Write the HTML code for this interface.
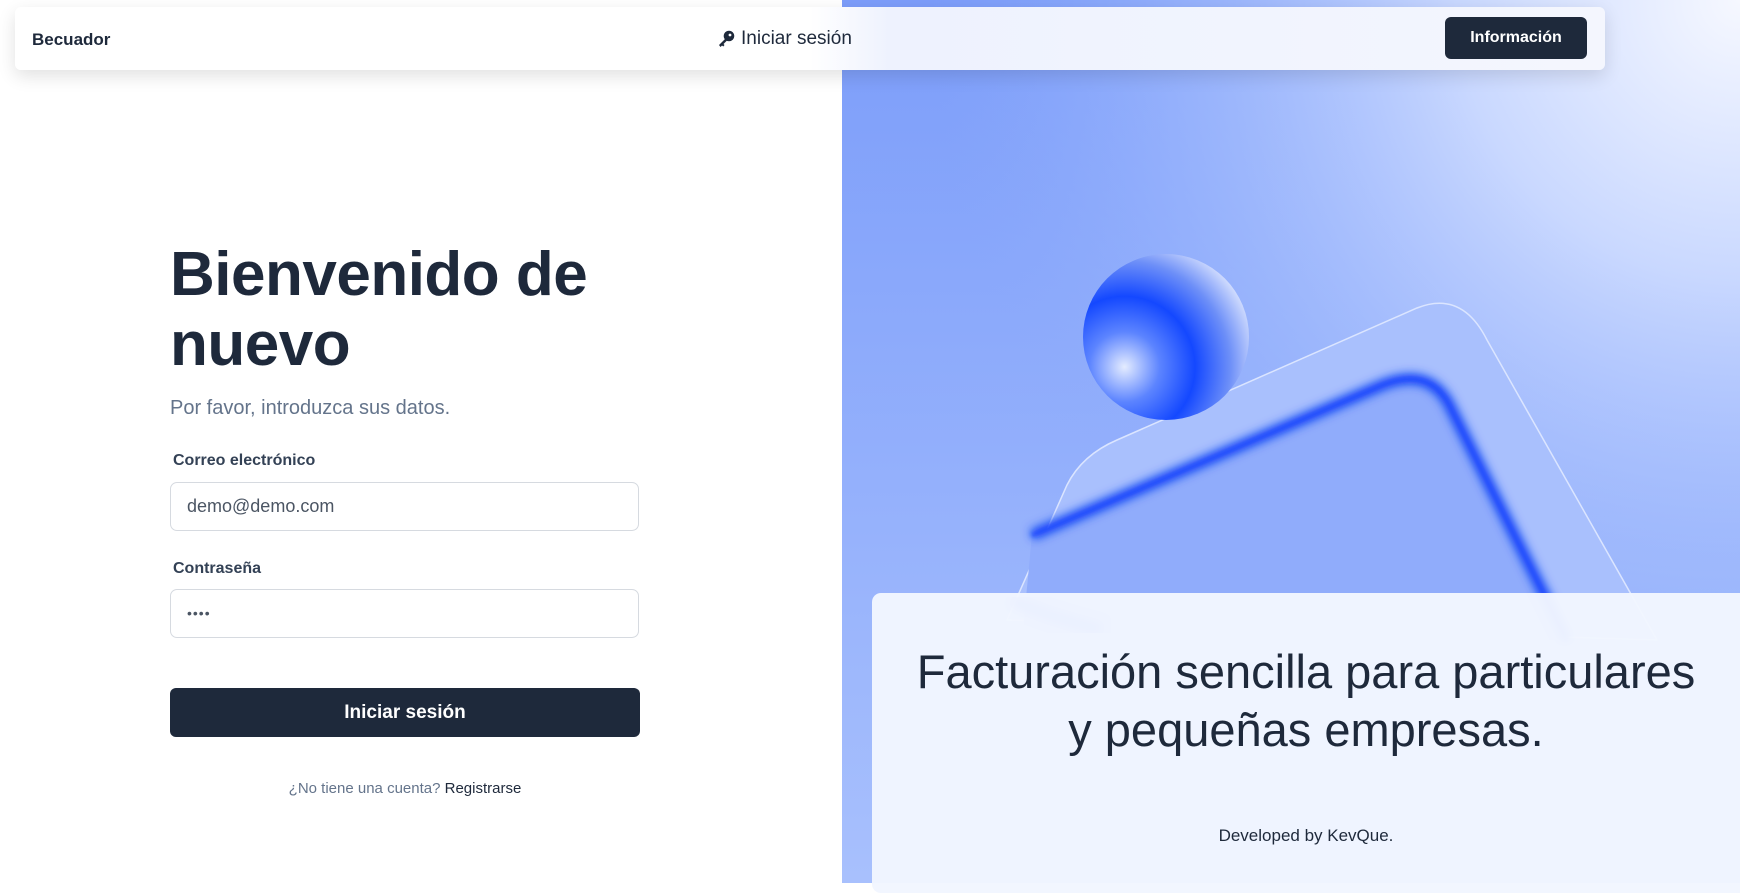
<!DOCTYPE html>
<html><head><meta charset="utf-8">
<style>
*{box-sizing:border-box;margin:0;padding:0}
html,body{width:1740px;height:883px;overflow:hidden;background:#fff;font-family:"Liberation Sans","DejaVu Sans",sans-serif;color:#1e293b}
.right{position:absolute;left:842px;top:0;width:898px;height:883px;overflow:hidden;background:#8eabfb}
.nav{position:absolute;left:15px;top:7px;width:1590px;height:63px;border-radius:6px;
background:linear-gradient(90deg,#fff 0%,#fff 50%,#eef2fe 55%,#f4f6fe 100%);box-shadow:0 6px 18px rgba(0,0,0,.12);z-index:5}
.brand{position:absolute;left:17px;top:23px;font-size:17px;font-weight:bold;color:#1e293b}
.mid{position:absolute;left:702px;top:21px;font-size:19px;color:#1e293b;display:flex;align-items:center;gap:6px}
.info{position:absolute;left:1430px;top:10px;width:142px;height:42px;border-radius:6px;background:#1e293b;color:#fff;font-size:16px;font-weight:bold;display:flex;align-items:center;justify-content:center}
h1{position:absolute;left:170px;top:240px;font-size:62px;line-height:70px;font-weight:bold;color:#1e293b;letter-spacing:-0.5px}
.sub{position:absolute;left:170px;top:397px;font-size:20px;color:#64748b}
.lbl{position:absolute;left:173px;font-size:16px;font-weight:bold;color:#334155}
.inp{position:absolute;left:170px;width:469px;height:49px;border:1px solid #d6dae0;border-radius:7px;font-size:18px;color:#4b5563;padding-left:16px;line-height:47px}
.btn{position:absolute;left:170px;top:688px;width:470px;height:49px;border-radius:6px;background:#1e293b;color:#fff;font-size:19px;font-weight:bold;text-align:center;line-height:49px}
.foot{position:absolute;left:170px;width:470px;top:780px;text-align:center;font-size:15px;color:#64748b}
.foot b{color:#1e293b;font-weight:normal}
.card{position:absolute;left:872px;top:593px;width:880px;height:300px;border-radius:9px;background:rgba(242,246,255,.97)}
.card h2{position:absolute;left:0;width:868px;top:50px;text-align:center;font-size:47px;line-height:58px;font-weight:normal;color:#1e293b}
.card p{position:absolute;left:0;width:868px;top:233px;text-align:center;font-size:17px;color:#1e293b}
</style></head><body>
<div class="right">
<svg width="898" height="883" viewBox="0 0 898 883">
<defs>
<radialGradient id="bg1" cx="1" cy="0" r="0.9"><stop offset="0" stop-color="#f6f8ff"/><stop offset="0.35" stop-color="#c9d8ff"/><stop offset="0.7" stop-color="#a3bcfd" stop-opacity=".6"/><stop offset="1" stop-color="#8eabfb" stop-opacity="0"/></radialGradient>
<linearGradient id="bg2" x1="0" y1="0" x2="0" y2="1"><stop offset="0" stop-color="#7c9dfa"/><stop offset="1" stop-color="#a8c0fd"/></linearGradient>
<radialGradient id="sp" cx="0.25" cy="0.68" r="0.85"><stop offset="0" stop-color="#e4ecff"/><stop offset="0.25" stop-color="#5c84ff"/><stop offset="0.5" stop-color="#1448ff"/><stop offset="0.75" stop-color="#6d8ff8"/><stop offset="1" stop-color="#e8eeff"/></radialGradient>
<filter id="bl"><feGaussianBlur stdDeviation="5"/></filter>
<filter id="bl2"><feGaussianBlur stdDeviation="2"/></filter>
</defs>
<rect width="898" height="883" fill="url(#bg2)"/>
<rect width="898" height="883" fill="url(#bg1)"/>
<path d="M165 620 L225 485 Q240 455 275 440 L575 308 Q620 290 645 340 L815 640 Z" fill="#a9c0fd" stroke="#dbe5ff" stroke-width="1.5"/>
<path d="M190 535 L540 385 Q590 365 610 410 L725 640 L180 640 Z" fill="#90acfb"/>
<path d="M190 535 L540 385 Q590 365 610 410 L725 640" fill="none" stroke="#0b3ef5" stroke-width="10" filter="url(#bl)"/>
<path d="M190 535 L540 385 Q590 365 610 410 L725 640" fill="none" stroke="#1a4cff" stroke-width="4" filter="url(#bl2)"/>
<path d="M170 600 Q200 615 260 630" fill="none" stroke="#1a4cff" stroke-width="14" filter="url(#bl)"/>
<circle cx="324" cy="337" r="83" fill="url(#sp)"/>
</svg>
</div>
<div class="nav">
<div class="brand">Becuador</div>
<div class="mid"><svg width="18" height="18" viewBox="0 0 18 18"><circle cx="12" cy="6" r="5.3" fill="#1e293b"/><circle cx="13" cy="5" r="1.4" fill="#fff"/><path d="M9 8 L2 15 L3.5 17 L5 15.5 L6.3 16.5 L7.5 15 L6.5 14 L11 9.5Z" fill="#1e293b"/></svg>Iniciar sesión</div>
<div class="info">Información</div>
</div>
<h1>Bienvenido de<br>nuevo</h1>
<div class="sub">Por favor, introduzca sus datos.</div>
<div class="lbl" style="top:452px">Correo electrónico</div>
<div class="inp" style="top:482px">demo@demo.com</div>
<div class="lbl" style="top:560px">Contraseña</div>
<div class="inp" style="top:589px;font-size:14px;letter-spacing:1px">••••</div>
<div class="btn">Iniciar sesión</div>
<div class="foot">¿No tiene una cuenta? <b>Registrarse</b></div>
<div class="card">
<h2>Facturación sencilla para particulares<br>y pequeñas empresas.</h2>
<p>Developed by KevQue.</p>
</div>
</body></html>
